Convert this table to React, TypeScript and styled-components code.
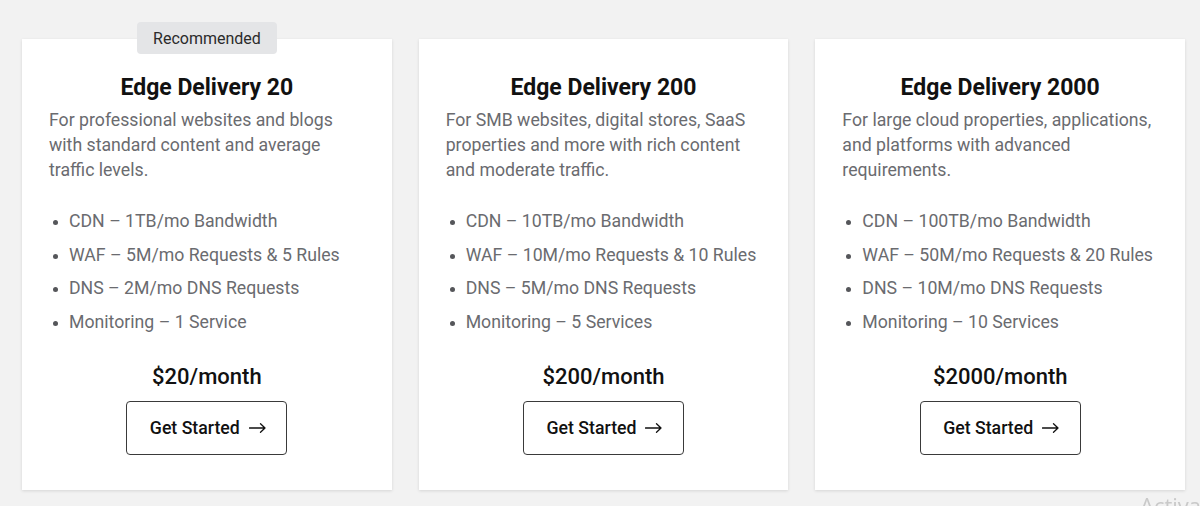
import styled, { createGlobalStyle } from "styled-components";

type Plan = {
  name: string;
  description: string;
  features: string[];
  price: string;
  recommended?: boolean;
};

const plans: Plan[] = [
  {
    name: "Edge Delivery 20",
    description:
      "For professional websites and blogs with standard content and average traffic levels.",
    features: [
      "CDN – 1TB/mo Bandwidth",
      "WAF – 5M/mo Requests & 5 Rules",
      "DNS – 2M/mo DNS Requests",
      "Monitoring – 1 Service",
    ],
    price: "$20/month",
    recommended: true,
  },
  {
    name: "Edge Delivery 200",
    description:
      "For SMB websites, digital stores, SaaS properties and more with rich content and moderate traffic.",
    features: [
      "CDN – 10TB/mo Bandwidth",
      "WAF – 10M/mo Requests & 10 Rules",
      "DNS – 5M/mo DNS Requests",
      "Monitoring – 5 Services",
    ],
    price: "$200/month",
  },
  {
    name: "Edge Delivery 2000",
    description:
      "For large cloud properties, applications, and platforms with advanced requirements.",
    features: [
      "CDN – 100TB/mo Bandwidth",
      "WAF – 50M/mo Requests & 20 Rules",
      "DNS – 10M/mo DNS Requests",
      "Monitoring – 10 Services",
    ],
    price: "$2000/month",
  },
];

const ArrowIcon = () => (
  <svg width="17" height="10" viewBox="0 0 17 10" fill="none">
    <path
      d="M0.5 5H16M11.5 0.8L16 5L11.5 9.2"
      stroke="#111"
      strokeWidth="1.3"
      strokeLinecap="round"
      strokeLinejoin="round"
    />
  </svg>
);

const App = () => {
  return (
    <>
      <GlobalStyle />
      <Page>
        {plans.map((plan) => (
          <Card key={plan.name}>
            {plan.recommended && <Badge>Recommended</Badge>}
            <Title>{plan.name}</Title>
            <Description>{plan.description}</Description>
            <FeatureList>
              {plan.features.map((f) => (
                <Feature key={f}>{f}</Feature>
              ))}
            </FeatureList>
            <Price>{plan.price}</Price>
            <StartButton>
              Get Started
              <ArrowIcon />
            </StartButton>
          </Card>
        ))}
      </Page>
      <Watermark>Activate Windows</Watermark>
    </>
  );
};

export default App;

const GlobalStyle = createGlobalStyle`
  html, body {
    margin: 0;
    padding: 0;
    background: #f2f2f2;
    font-family: Roboto, "Liberation Sans", sans-serif;
    overflow: hidden;
  }
`;

const Page = styled.div`
  display: flex;
  gap: 27px;
  padding: 39px 15px 0 22px;
  height: 506px;
  box-sizing: border-box;
`;

const Card = styled.div`
  position: relative;
  display: flex;
  flex-direction: column;
  width: 370px;
  height: 451px;
  box-sizing: border-box;
  padding: 35px 27px 0;
  background: #fff;
  box-shadow: 0 1px 3px rgba(0, 0, 0, 0.12);
`;

const Badge = styled.div`
  position: absolute;
  top: -17px;
  left: 115px;
  width: 140px;
  height: 32px;
  display: flex;
  align-items: center;
  justify-content: center;
  background: #e4e5e7;
  border-radius: 4px;
  font-size: 16px;
  color: #2b2b2b;
`;

const Title = styled.h2`
  margin: 0;
  text-align: center;
  font-size: 23px;
  line-height: 28px;
  font-weight: 700;
  color: #111;
`;

const Description = styled.p`
  margin: 6px 0 0;
  font-size: 17.7px;
  line-height: 25px;
  color: #6a6b6f;
`;

const FeatureList = styled.ul`
  list-style: none;
  margin: 22px 0 0;
  padding: 0;
`;

const Feature = styled.li`
  position: relative;
  padding-left: 20px;
  font-size: 17.7px;
  line-height: 33.7px;
  color: #6a6b6f;

  &::before {
    content: "";
    position: absolute;
    left: 4px;
    top: 15px;
    width: 5px;
    height: 5px;
    border-radius: 50%;
    background: #55565a;
  }
`;

const Price = styled.div`
  margin-top: 23px;
  text-align: center;
  font-size: 22px;
  line-height: 28px;
  font-weight: 500;
  color: #111;
`;

const StartButton = styled.button`
  align-self: center;
  margin-top: 10px;
  width: 161px;
  height: 54px;
  display: flex;
  align-items: center;
  justify-content: center;
  gap: 9px;
  padding: 0 0 0 2px;
  background: #fff;
  border: 1px solid #3a3a3a;
  border-radius: 4px;
  font-family: Roboto, "Liberation Sans", sans-serif;
  font-size: 17.7px;
  font-weight: 500;
  color: #111;
  cursor: pointer;
`;

const Watermark = styled.div`
  position: fixed;
  left: 1140px;
  top: 490px;
  font-family: "Open Sans", sans-serif;
  font-size: 22px;
  color: #c9c9c9;
  white-space: nowrap;
`;
